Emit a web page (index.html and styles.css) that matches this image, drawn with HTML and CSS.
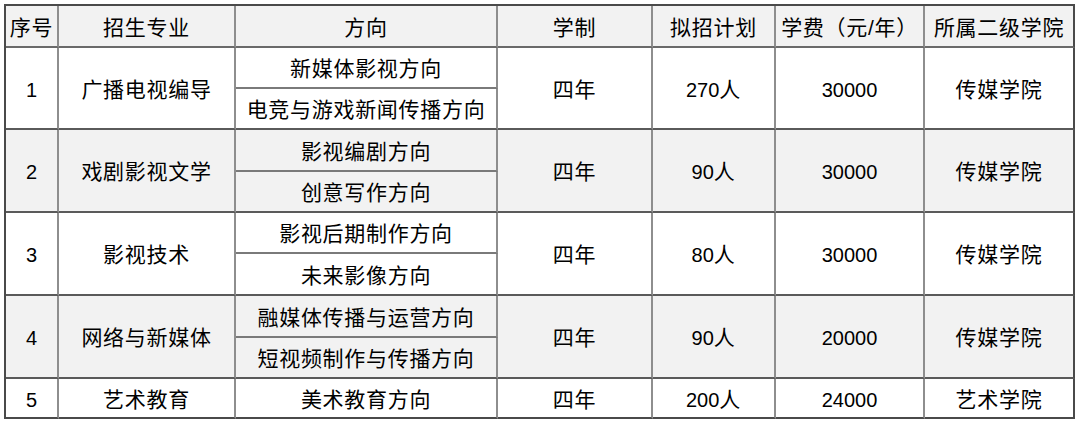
FILE: index.html
```html
<!DOCTYPE html>
<html lang="zh-CN">
<head>
<meta charset="utf-8">
<link rel="stylesheet" href="styles.css">
</head>
<body>
<table class="plan">
  <colgroup>
    <col class="c1"><col class="c2"><col class="c3"><col class="c4"><col class="c5"><col class="c6"><col class="c7">
  </colgroup>
  <tr class="head">
    <td>序号</td><td>招生专业</td><td>方向</td><td>学制</td><td>拟招计划</td><td>学费（元/年）</td><td class="last">所属二级学院</td>
  </tr>
  <tr class="white">
    <td rowspan="2"><span class="d">1</span></td><td rowspan="2">广播电视编导</td><td class="r41 sub">新媒体影视方向</td><td rowspan="2">四年</td><td rowspan="2"><span class="d">270</span>人</td><td rowspan="2"><span class="d">30000</span></td><td rowspan="2" class="last">传媒学院</td>
  </tr>
  <tr class="white"><td class="r41">电竞与游戏新闻传播方向</td></tr>
  <tr class="grey">
    <td rowspan="2"><span class="d">2</span></td><td rowspan="2">戏剧影视文学</td><td class="r42 sub">影视编剧方向</td><td rowspan="2">四年</td><td rowspan="2"><span class="d">90</span>人</td><td rowspan="2"><span class="d">30000</span></td><td rowspan="2" class="last">传媒学院</td>
  </tr>
  <tr class="grey"><td class="r41">创意写作方向</td></tr>
  <tr class="white">
    <td rowspan="2"><span class="d">3</span></td><td rowspan="2">影视技术</td><td class="r41 sub">影视后期制作方向</td><td rowspan="2">四年</td><td rowspan="2"><span class="d">80</span>人</td><td rowspan="2"><span class="d">30000</span></td><td rowspan="2" class="last">传媒学院</td>
  </tr>
  <tr class="white"><td class="r42">未来影像方向</td></tr>
  <tr class="grey">
    <td rowspan="2"><span class="d">4</span></td><td rowspan="2">网络与新媒体</td><td class="r42 sub">融媒体传播与运营方向</td><td rowspan="2">四年</td><td rowspan="2"><span class="d">90</span>人</td><td rowspan="2"><span class="d">20000</span></td><td rowspan="2" class="last">传媒学院</td>
  </tr>
  <tr class="grey"><td class="r41">短视频制作与传播方向</td></tr>
  <tr class="white final">
    <td><span class="d">5</span></td><td>艺术教育</td><td class="r40">美术教育方向</td><td>四年</td><td><span class="d">200</span>人</td><td><span class="d">24000</span></td><td class="last">艺术学院</td>
  </tr>
</table>
</body>
</html>
```
FILE: styles.css
```css
html, body {
  margin: 0;
  padding: 0;
  background: #ffffff;
}
body {
  padding: 4px 0 0 4px;
}
.plan {
  border-collapse: separate;
  border-spacing: 0;
  table-layout: fixed;
  width: 1071px;
  border-top: 2px solid #4a4a4a;
  border-left: 2px solid #4a4a4a;
  font-family: "Liberation Sans", "Noto Sans CJK SC", sans-serif;
  font-size: 21px;
  letter-spacing: 0.7px;
  color: #000000;
}
.c1 { width: 53px; }
.c2 { width: 177px; }
.c3 { width: 262px; }
.c4 { width: 155px; }
.c5 { width: 123px; }
.c6 { width: 149px; }
.c7 { width: 150px; }
.plan td {
  padding: 2px 0 0 0;
  text-align: center;
  vertical-align: middle;
  border-right: 2px solid #8e8e8e;
  border-bottom: 2px solid #5a5a5a;
  line-height: 1;
  white-space: nowrap;
}
.d {
  font-size: 20px;
  letter-spacing: 0;
}
.plan td.last { border-right-color: #4a4a4a; }
.plan td.sub { border-bottom-color: #7a7a7a; }
.head td { height: 38px; background: #f2f2f2; border-bottom-color: #6a6a6a; }
.grey td { background: #f2f2f2; }
.white td { background: #ffffff; }
.r41 { height: 37px; }
.r42 { height: 38px; }
.r40 { height: 36px; }
.final td { border-bottom-color: #4a4a4a; }
```
